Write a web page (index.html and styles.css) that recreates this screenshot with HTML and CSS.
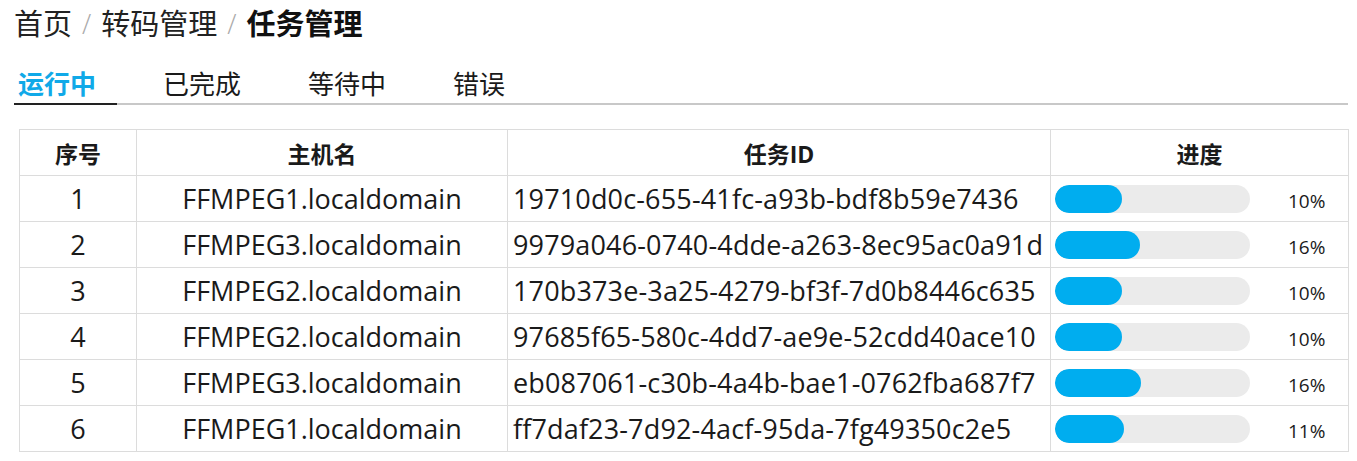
FILE: index.html
```html
<!DOCTYPE html>
<html lang="zh-CN">
<head>
<meta charset="utf-8">
<title>任务管理</title>
<link rel="stylesheet" href="styles.css">
</head>
<body>
<div class="page">
  <nav class="crumbs">
    <span class="crumb">首页</span><span class="sep">/</span><span class="crumb">转码管理</span><span class="sep">/</span><span class="crumb current">任务管理</span>
  </nav>
  <div class="tabs">
    <div class="tab active">运行中</div>
    <div class="tab">已完成</div>
    <div class="tab">等待中</div>
    <div class="tab">错误</div>
  </div>
  <table class="grid">
    <thead>
      <tr><th class="c-no">序号</th><th class="c-host">主机名</th><th class="c-id">任务ID</th><th class="c-prog">进度</th></tr>
    </thead>
    <tbody>
      <tr><td class="c-no">1</td><td class="c-host">FFMPEG1.localdomain</td><td class="c-id">19710d0c-655-41fc-a93b-bdf8b59e7436</td><td class="c-prog"><div class="prog"><div class="track"><div class="fill" style="width:67px"></div></div><span class="pct">10%</span></div></td></tr>
      <tr><td class="c-no">2</td><td class="c-host">FFMPEG3.localdomain</td><td class="c-id">9979a046-0740-4dde-a263-8ec95ac0a91d</td><td class="c-prog"><div class="prog"><div class="track"><div class="fill" style="width:85px"></div></div><span class="pct">16%</span></div></td></tr>
      <tr><td class="c-no">3</td><td class="c-host">FFMPEG2.localdomain</td><td class="c-id">170b373e-3a25-4279-bf3f-7d0b8446c635</td><td class="c-prog"><div class="prog"><div class="track"><div class="fill" style="width:67px"></div></div><span class="pct">10%</span></div></td></tr>
      <tr><td class="c-no">4</td><td class="c-host">FFMPEG2.localdomain</td><td class="c-id">97685f65-580c-4dd7-ae9e-52cdd40ace10</td><td class="c-prog"><div class="prog"><div class="track"><div class="fill" style="width:67px"></div></div><span class="pct">10%</span></div></td></tr>
      <tr><td class="c-no">5</td><td class="c-host">FFMPEG3.localdomain</td><td class="c-id">eb087061-c30b-4a4b-bae1-0762fba687f7</td><td class="c-prog"><div class="prog"><div class="track"><div class="fill" style="width:86px"></div></div><span class="pct">16%</span></div></td></tr>
      <tr><td class="c-no">6</td><td class="c-host">FFMPEG1.localdomain</td><td class="c-id">ff7daf23-7d92-4acf-95da-7fg49350c2e5</td><td class="c-prog"><div class="prog"><div class="track"><div class="fill" style="width:69px"></div></div><span class="pct">11%</span></div></td></tr>
    </tbody>
  </table>
</div>
</body>
</html>
```

FILE: styles.css
```css
* { box-sizing: border-box; }
html, body { margin: 0; padding: 0; background: #fff; }
body {
  font-family: "Open Sans", "Noto Sans CJK SC", sans-serif;
  color: #1a1a1a;
}
.page { padding: 4px 9px 0 14px; }
.crumbs {
  display: flex;
  align-items: center;
  font-size: 29px;
  line-height: 40px;
  height: 40px;
  padding-left: 0;
}
.crumb { color: #222; }
.crumb.current { font-weight: 700; color: #111; }
.sep { color: #aaa; margin: 0 10px; font-size: 27px; font-weight: 300; }
.tabs {
  display: flex;
  gap: 42px;
  margin-top: 22px;
  border-bottom: 2px solid #c8c8c8;
}
.tab {
  font-size: 26px;
  line-height: 37px;
  width: 103px;
  padding-left: 4px;
  white-space: nowrap;
  color: #1a1a1a;
  margin-bottom: -2px;
  border-bottom: 2px solid transparent;
}
.tab.active {
  color: #10a9e8;
  font-weight: 700;
  border-bottom-color: #222;
}
.grid {
  margin-top: 24px;
  margin-left: 5px;
  width: 1329px;
  border-collapse: collapse;
  table-layout: fixed;
}
.grid th, .grid td {
  border: 1px solid #dcdcdc;
  height: 46px;
  padding: 0;
  vertical-align: middle;
}
.grid th {
  font-size: 23px;
  font-weight: 700;
  text-align: center;
}
.grid td { font-size: 27px; color: #1a1a1a; }
.c-no { width: 117px; text-align: center; }
.c-host { width: 371px; text-align: center; }
.c-id { width: 543px; }
td.c-id { padding-left: 5px; white-space: nowrap; letter-spacing: 0.15px; }
.c-prog { width: 298px; }
.prog { display: flex; align-items: center; padding-left: 4px; }
.track {
  width: 195px;
  height: 28px;
  border-radius: 14px;
  background: #ebebeb;
  overflow: hidden;
}
.fill {
  height: 100%;
  background: #00adef;
  border-radius: 14px;
}
.pct {
  font-size: 19px;
  margin-left: 38px;
  margin-top: 4px;
}
```
